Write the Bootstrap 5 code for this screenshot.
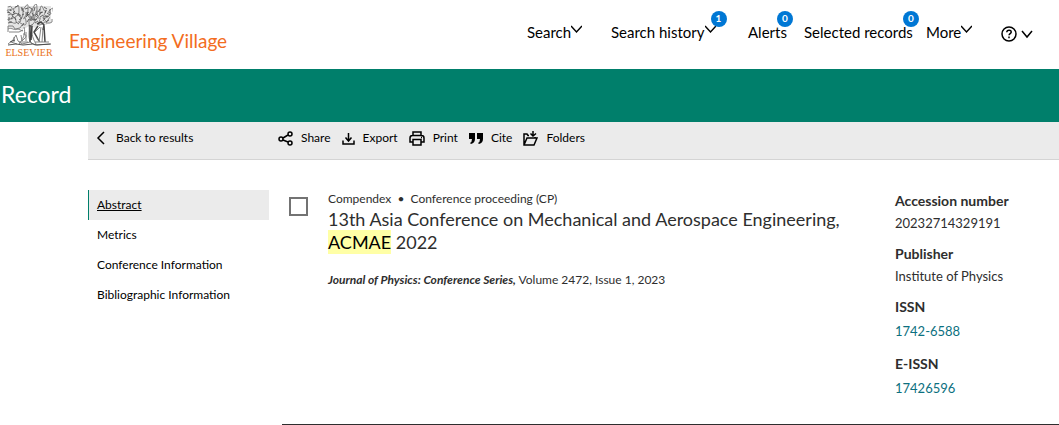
<!DOCTYPE html>
<html lang="en">
<head>
<meta charset="utf-8">
<meta name="viewport" content="width=device-width, initial-scale=1">
<title>Record - Engineering Village</title>
<link href="https://cdn.jsdelivr.net/npm/bootstrap@5.3.0/dist/css/bootstrap.min.css" rel="stylesheet">
<style>
body{font-family:Lato,"Noto Sans",sans-serif;font-size:14px;line-height:22px;color:#2e2e2e;background:#fff}
a,button{color:#000;text-decoration:none}
button{background:none;border:0;padding:0;white-space:nowrap}
svg{flex:none;display:block}
.ic{fill:none;stroke:#000;stroke-width:1.5}
.site-head{min-height:69px}
.publisher{margin-left:5px}
.wordmark{font-family:"Liberation Serif",serif;font-size:10px;line-height:12px;color:#e9711c}
.product{font-size:19px;line-height:26px;color:#f36d21}
.menu-grid{display:grid;grid-template-columns:84px 137px 56px 122px 75px 32px;align-content:start;font-size:15px;line-height:24px;margin-right:26px;padding-top:20px}
.menu-grid a{white-space:nowrap}
.count{position:absolute;top:-9px;left:100%;margin-left:-10px;width:16px;height:16px;border-radius:8px;background:#0077d4;color:#fff;font-size:10px;line-height:15px;font-weight:700;text-align:center}
.hist .count{margin-left:-5px}
.banner{background:#007f6b;height:53px}
.banner h1{font-size:23px;line-height:50px;color:#fff;font-weight:400;padding-left:1px}
.shell{margin-left:88px}
.tools{background:#ebebeb;border-bottom:1px solid #d4d4d4;height:38px;font-size:12px;line-height:32px}
.tools button{height:32px}
.back{width:190px}
.actions{gap:11px}
.panes{padding-top:30px}
.side{width:181px;font-size:12px;flex:none}
.side a{display:block;height:30px;line-height:30px;padding-left:8px;border-left:1px solid transparent}
.side a.current{background:#ebebeb;border-color:#007f6b;text-decoration:underline}
.record{margin-left:13px;border-bottom:1px solid #2e2e2e;padding-bottom:14px}
.pick{appearance:none;width:19px;height:19px;border:2px solid #737373;margin:7px 20px 0 7px;background:#fff;flex:none}
.pick:checked{background:#007f6b}
.kind{font-size:12px;line-height:18px}
.record h2{font-size:18px;line-height:23px;font-weight:400;margin:0}
.hit{background:#ffffa6;color:#000;padding:1px 0}
.source{font-size:12px;line-height:18px;margin-top:17px}
.facts{width:164px;flex:none;font-size:14px}
.facts dt,.facts dd{margin:0;line-height:22px}
.facts dd{padding-bottom:9px;font-size:13px}
.facts a{color:#0c7080}
.facts .linked{padding:2px 0 11px}
</style>
<script src="https://cdn.jsdelivr.net/npm/bootstrap@5.3.0/dist/js/bootstrap.bundle.min.js" defer></script>
</head>
<body>
<header class="site-head d-flex">
  <a href="#" class="publisher d-flex flex-column align-items-center pt-1" aria-label="Elsevier home">
    <svg width="48" height="43" viewBox="0 0 48 43" fill="none" stroke="#777" stroke-width=".9">
      <path fill="#e4e4e4" stroke="none" d="M2 2h44v16l-5 3-6 0-4 3-7-2-5 3-16-1z"/>
      <path d="M3 3q3-2 4 1t-3 2 1 3 4-1 0-4 3-2 2 4-2 4 2 2 4-3-1-4 3-2 3 3-2 4 3 3 4-2-2-4 2-3 4 1 0 4-2 3 3 1 3-4-1-3 3-2 3 3-2 4 3 2 3-4 0-3 3-1 1 5M3 11q3-2 5 1t-3 3 1 3 5-1-1-4 3-2 3 3-2 4 3 2 4-3-2-3 2-3 4 1 0 4-1 3 4 1 2-4-2-3 3-1 4 2-1 4 3 2 3-4-1-3 4-1 0 4-2 3 4 0 2-4"/>
      <path stroke="#555" d="M2 8l3 1M7 11l4-2M6 15l2-3M13 9l2 3M14 16l3-2M19 8l-2-3M21 13l3-3M22 18l2-3M27 9l2 3M28 16l4-1M33 8l2-3M35 13l3-2M38 17l2-3M42 9l3 2M10 3l3-1M24 3l3 2M39 3l3 2M3 19l4-1M11 18l3 2M19 19l-2 3M30 19l3-2"/>
      <path stroke="#444" stroke-width=".8" d="M5 5l1 2M10 7l-2 2M16 3l1 2M20 5l3-1M23 8l-1 3M30 3l-1 4M35 9l3-1M41 6l-1 3M45 5v4M9 13l2 3M17 11l2-1M26 12l1 4M33 12l-2-2M40 12l3 1M44 16l-3 2M4 13v3"/>
      <path d="M3 22h5l2 3 5-1 2-3M3 25c4-2 6 2 10 0l5 2M4 28h10l4-2M3 22v6M19 23c2 7-1 12-5 17M24 21c1 8-2 13 3 19M27 20c-1 8 0 13 4 20"/>
      <path stroke="#444" stroke-width="1.500" d="M25 21v17M27 22l-1 14M32 20l4-2 3 3-1 5M39 22l1 16M33 22l-4 6 5 9"/>
      <path d="M36 23l-2 15M38 24l-1 14M30 28l5-5M31 33l4 5M18 30c3 0 4 2 2 4l-3 3-1-6M21 28v9M3 40l5-4 3-5 2 6 4 3 8-2 5 3 15-1M6 38l6 2M9 33v5M14 38h9M30 38h14"/>
      <path stroke="#444" d="M3 41l8-1 7 1 10-1 4 1 14-1M5 38l5-2"/>
    </svg>
    <span class="wordmark">ELSEVIER</span>
  </a>
  <a href="#" class="product ms-3 pt-1 mt-4 text-nowrap">Engineering Village</a>
  <nav class="menu-grid ms-auto" aria-label="Main">
    <div><a href="#" class="d-inline-flex">Search<svg class="ic mt-1" width="11" height="12"><path d="M0 2l5.500 6 5.500-6"/></svg></a></div>
    <div class="hist"><a href="#" class="d-inline-flex position-relative">Search history<svg class="ic mt-1" width="11" height="12"><path d="M0 2l5.500 6 5.500-6"/></svg><span class="count">1</span></a></div>
    <div><a href="#" class="d-inline-flex position-relative">Alerts<span class="count">0</span></a></div>
    <div><a href="#" class="d-inline-flex position-relative">Selected records<span class="count">0</span></a></div>
    <div><a href="#" class="d-inline-flex">More<svg class="ic mt-1" width="11" height="12"><path d="M0 2l5.500 6 5.500-6"/></svg></a></div>
    <button type="button" class="d-flex align-items-center pt-1" aria-label="Help"><svg class="ic me-1" width="16" height="16"><circle cx="8" cy="8" r="7"/><path d="M5.800 6.300c0-3 4.600-2.700 4.400-.2-.1 1.500-2.100 1.400-2.100 3.100M8 10.500v1.700"/></svg><svg class="ic" width="12" height="12"><path d="M1 3l5 6 5-6"/></svg></button>
  </nav>
</header>
<div class="banner"><h1 class="m-0">Record</h1></div>
<div class="shell">
  <div class="tools d-flex">
    <button type="button" class="back d-flex align-items-center"><svg class="ic me-2 ms-2" width="12" height="14"><path d="M8 1L2 7l6 6"/></svg>Back to results</button>
    <div class="actions d-flex">
    <button type="button" class="d-flex align-items-center gap-2"><svg class="ic" width="15" height="15"><circle cx="3" cy="8" r="2"/><circle cx="12" cy="3" r="2"/><circle cx="12" cy="12" r="2"/><path d="M5 7l5-3M5 9l5 2"/></svg>Share</button>
    <button type="button" class="d-flex align-items-center gap-2"><svg class="ic" width="13" height="15"><path d="M1 9.500V13h11V9.500M6.500 2v8M3.500 6.500l3 3.500 3-3.500"/></svg>Export</button>
    <button type="button" class="d-flex align-items-center gap-2"><svg class="ic" width="16" height="15"><path d="M4 4.500V1h8v3.500M4 11H1V7q0-2.500 2.500-2.500h9Q15 4.500 15 7v4h-3M4 8.500h8V14H4zM12 6.500h1"/></svg>Print</button>
    <button type="button" class="d-flex align-items-center gap-2"><svg width="14" height="13"><path d="M0 1h6v6q0 4-4 5l-1-1q2-1 2-4H0zM8 1h6v6q0 4-4 5l-1-1q2-1 2-4H8z"/></svg>Cite</button>
    <button type="button" class="d-flex align-items-center gap-2"><svg class="ic" width="15" height="16"><path d="M6 5.500H5L4 4H1v11h10l3-7H4L1 15M12 8V7M10 1v5M7.500 3.500L10 6l3-2.500"/></svg>Folders</button>
    </div>
  </div>
  <main class="panes d-flex">
    <nav class="side d-flex flex-column" aria-label="Record sections">
      <a href="#" class="current">Abstract</a><a href="#">Metrics</a><a href="#">Conference Information</a><a href="#">Bibliographic Information</a>
    </nav>
    <article class="record d-flex flex-grow-1">
      <input type="checkbox" class="pick" aria-label="Select record">
      <div class="flex-grow-1">
        <div class="kind">Compendex &nbsp;•&nbsp; Conference proceeding (CP)</div>
        <h2>13th Asia Conference on Mechanical and Aerospace Engineering, <mark class="hit">ACMAE</mark> 2022</h2>
        <p class="source mb-0"><b><i>Journal of Physics: Conference Series,</i></b> Volume 2472, Issue 1, 2023</p>
      </div>
      <dl class="facts mb-0">
        <dt>Accession number</dt><dd>20232714329191</dd>
        <dt>Publisher</dt><dd>Institute of Physics</dd>
        <dt>ISSN</dt><dd class="linked"><a href="#">1742-6588</a></dd>
        <dt>E-ISSN</dt><dd class="linked"><a href="#">17426596</a></dd>
      </dl>
    </article>
  </main>
</div>
</body>
</html>
